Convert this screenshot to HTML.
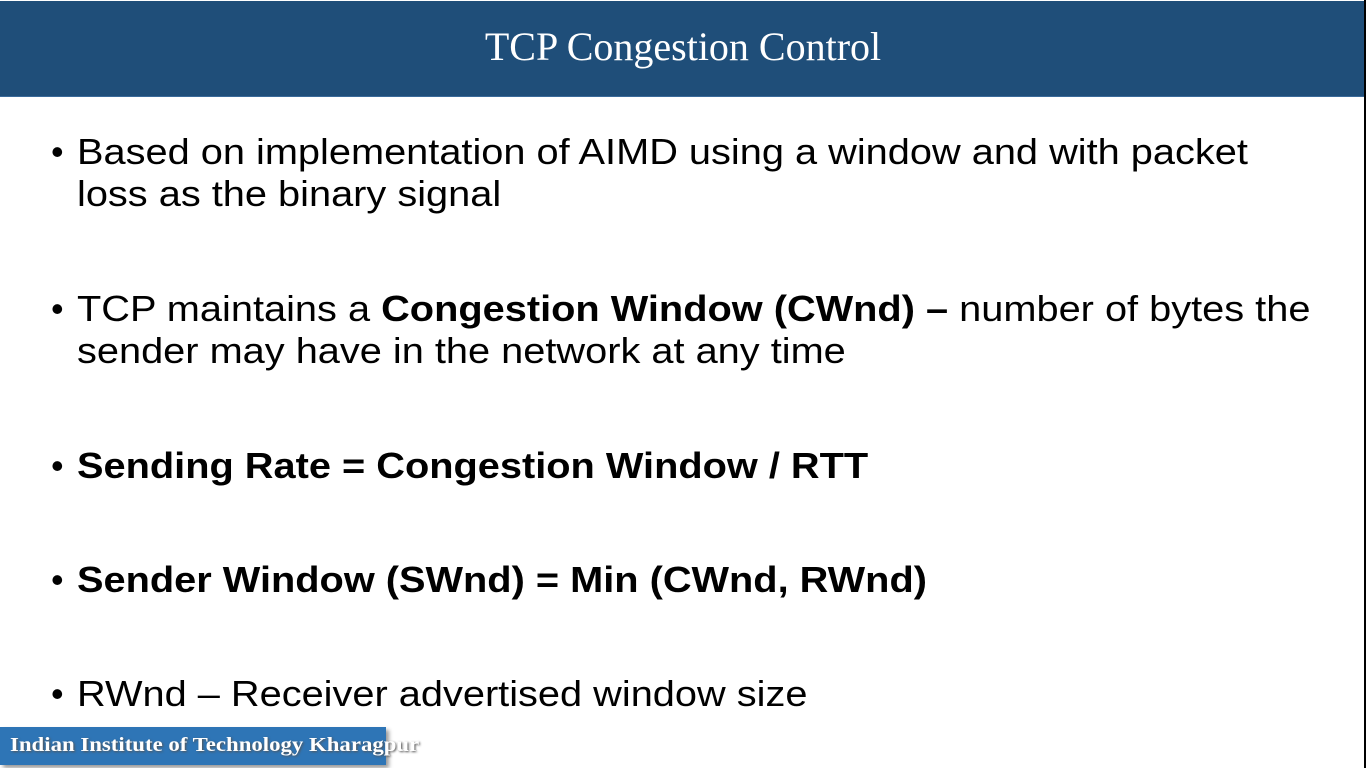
<!DOCTYPE html>
<html><head><meta charset="utf-8"><style>
html,body{margin:0;padding:0;}
body{width:1366px;height:768px;position:relative;background:#fff;overflow:hidden;font-family:"Liberation Sans",Arial,sans-serif;}
.hdr{position:absolute;left:0;top:1px;width:1364px;height:95px;background:#1f4e79;border-bottom:1px solid #3a6a9a;}
.edge{position:absolute;right:0;top:0;width:2px;height:768px;background:#000;}
.title{position:absolute;left:0;width:1366px;top:24px;text-align:center;color:#fff;font-family:"Liberation Serif",serif;font-size:40px;line-height:45px;}
.l{position:absolute;left:77px;font-size:36px;line-height:36px;color:#000;white-space:nowrap;transform:scaleX(1.104);transform-origin:0 0;}
.b{position:absolute;left:51px;font-size:36px;line-height:36px;}
.foot{position:absolute;left:0;top:727px;width:386px;height:38px;background:#2e75b6;box-shadow:3px 3px 4px rgba(0,0,0,.4);}
.ft{position:absolute;left:10px;top:733px;color:#fff;font-family:"Liberation Serif",serif;font-weight:bold;font-size:20px;line-height:24px;white-space:nowrap;text-shadow:1px 1px 2px #555;transform:scaleX(1.14);transform-origin:0 0;}
</style></head><body>
<div class="hdr"></div>
<div class="title">TCP Congestion Control</div>
<div class="b" style="top:134px">•</div>
<div class="l" style="top:134px">Based on implementation of AIMD using a window and with packet</div>
<div class="l" style="top:176px">loss as the binary signal</div>
<div class="b" style="top:291px">•</div>
<div class="l" style="top:291px">TCP maintains a <b>Congestion Window (CWnd) –</b> number of bytes the</div>
<div class="l" style="top:333px">sender may have in the network at any time</div>
<div class="b" style="top:448px">•</div>
<div class="l" style="top:448px"><b>Sending Rate = Congestion Window / RTT</b></div>
<div class="b" style="top:562px">•</div>
<div class="l" style="top:562px"><b>Sender Window (SWnd) = Min (CWnd, RWnd)</b></div>
<div class="b" style="top:676px">•</div>
<div class="l" style="top:676px">RWnd – Receiver advertised window size</div>
<div class="foot"></div>
<div class="ft">Indian Institute of Technology Kharagpur</div>
<div class="edge"></div>
</body></html>
